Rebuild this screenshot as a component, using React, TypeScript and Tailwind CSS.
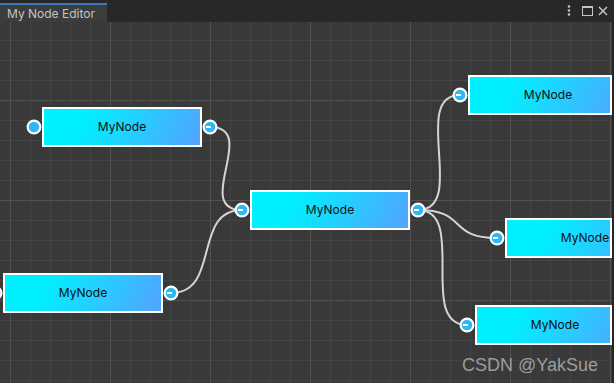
import React from "react";

const vMinor: number[] = [];
const vMajor: number[] = [];
for (let x = 10; x < 614; x += 20) {
  if ((x - 10) % 100 === 0) vMajor.push(x);
  else vMinor.push(x);
}
const hMinor: number[] = [];
const hMajor: number[] = [];
for (let y = 20; y < 383; y += 20) {
  if (y % 100 === 0) hMajor.push(y);
  else hMinor.push(y);
}

const curves = [
  "M210 127 C260 127 192 210 242 210",
  "M171 293 C221 293 192 210 242 210",
  "M418 210 C468 210 410 95 460 95",
  "M418 210 C468 210 447 238 497 238",
  "M418 210 C468 210 417 325 467 325",
];

const ports: { x: number; y: number; c: boolean }[] = [
  { x: 34, y: 127, c: false },
  { x: 210, y: 127, c: true },
  { x: 242, y: 210, c: true },
  { x: 418, y: 210, c: true },
  { x: -5, y: 293, c: false },
  { x: 171, y: 293, c: true },
  { x: 460, y: 95, c: true },
  { x: 497, y: 238, c: true },
  { x: 467, y: 325, c: true },
];

function Node({ className }: { className: string }) {
  return (
    <div className={"absolute h-[40px] overflow-hidden border-2 border-white " + className}>
      <div className="flex h-full w-[156px] items-center justify-center bg-[linear-gradient(115deg,#00f0ff_25%,#4ea8ff_95%)] text-[12px] text-[#111] [font-family:Inter,Roboto,sans-serif]">
        MyNode
      </div>
    </div>
  );
}

export default function App() {
  return (
    <div className="flex h-[383px] w-[614px] flex-col overflow-hidden bg-[#393939] [font-family:Inter,Roboto,sans-serif]">
      <div className="flex h-[22px] shrink-0 items-end bg-[#282828]">
        <div className="flex h-[19px] w-[107px] items-center border-t-2 border-[#3a79bb] bg-[#3c3c3c] pl-[7px] text-[12px] text-[#c4c4c4]">
          My Node Editor
        </div>
        <div className="ml-auto flex h-full items-center pr-[6px]">
          <svg width="4" height="12" viewBox="0 0 4 12">
            <circle cx="2" cy="1.5" r="1.3" fill="#c4c4c4" />
            <circle cx="2" cy="5.5" r="1.3" fill="#c4c4c4" />
            <circle cx="2" cy="9.5" r="1.3" fill="#c4c4c4" />
          </svg>
          <svg className="ml-[11px]" width="11" height="10" viewBox="0 0 11 10">
            <rect x="0.5" y="0.5" width="10" height="9" fill="none" stroke="#c4c4c4" strokeWidth="1" />
            <rect x="0" y="0" width="11" height="2" fill="#c4c4c4" />
          </svg>
          <svg className="ml-[5px]" width="10" height="10" viewBox="0 0 10 10">
            <path d="M1 1 L9 9 M9 1 L1 9" stroke="#c4c4c4" strokeWidth="1.5" />
          </svg>
        </div>
      </div>
      <div className="relative flex-1 overflow-hidden border-r-2 border-[#262626]">
        <svg className="absolute left-0 top-0" width="614" height="361" viewBox="0 22 614 361">
          {hMinor.map((y) => (
            <line key={"hm" + y} x1="0" x2="614" y1={y + 0.5} y2={y + 0.5} stroke="#444444" strokeWidth="1" />
          ))}
          {vMinor.map((x) => (
            <line key={"vm" + x} y1="22" y2="383" x1={x + 0.5} x2={x + 0.5} stroke="#444444" strokeWidth="1" />
          ))}
          {hMajor.map((y) => (
            <line key={"hM" + y} x1="0" x2="614" y1={y + 0.5} y2={y + 0.5} stroke="#525252" strokeWidth="1" />
          ))}
          {vMajor.map((x) => (
            <line key={"vM" + x} y1="22" y2="383" x1={x + 0.5} x2={x + 0.5} stroke="#525252" strokeWidth="1" />
          ))}
          {curves.map((d, i) => (
            <path key={i} d={d} fill="none" stroke="#d4d4d4" strokeWidth="2" />
          ))}
          {ports.map((p, i) => (
            <g key={"p" + i}>
              <circle cx={p.x} cy={p.y} r="7.5" fill="#ffffff" />
              <circle cx={p.x} cy={p.y} r="5.3" fill="#2db9f5" />
              {p.c && <line x1={p.x - 4} x2={p.x + 1} y1={p.y} y2={p.y} stroke="#ffffff" strokeWidth="2" />}
            </g>
          ))}
        </svg>
        <Node className="left-[42px] top-[85px] w-[160px]" />
        <Node className="left-[250px] top-[168px] w-[160px]" />
        <Node className="left-[3px] top-[251px] w-[160px]" />
        <Node className="left-[468px] top-[53px] w-[144px]" />
        <Node className="left-[505px] top-[196px] w-[107px]" />
        <Node className="left-[475px] top-[283px] w-[137px]" />
        <div className="absolute left-[462px] top-[333px] text-[18px] leading-[20px] text-[#9c9c9c] [font-family:'Liberation_Sans',Arial,sans-serif]">
          CSDN @YakSue
        </div>
      </div>
    </div>
  );
}
